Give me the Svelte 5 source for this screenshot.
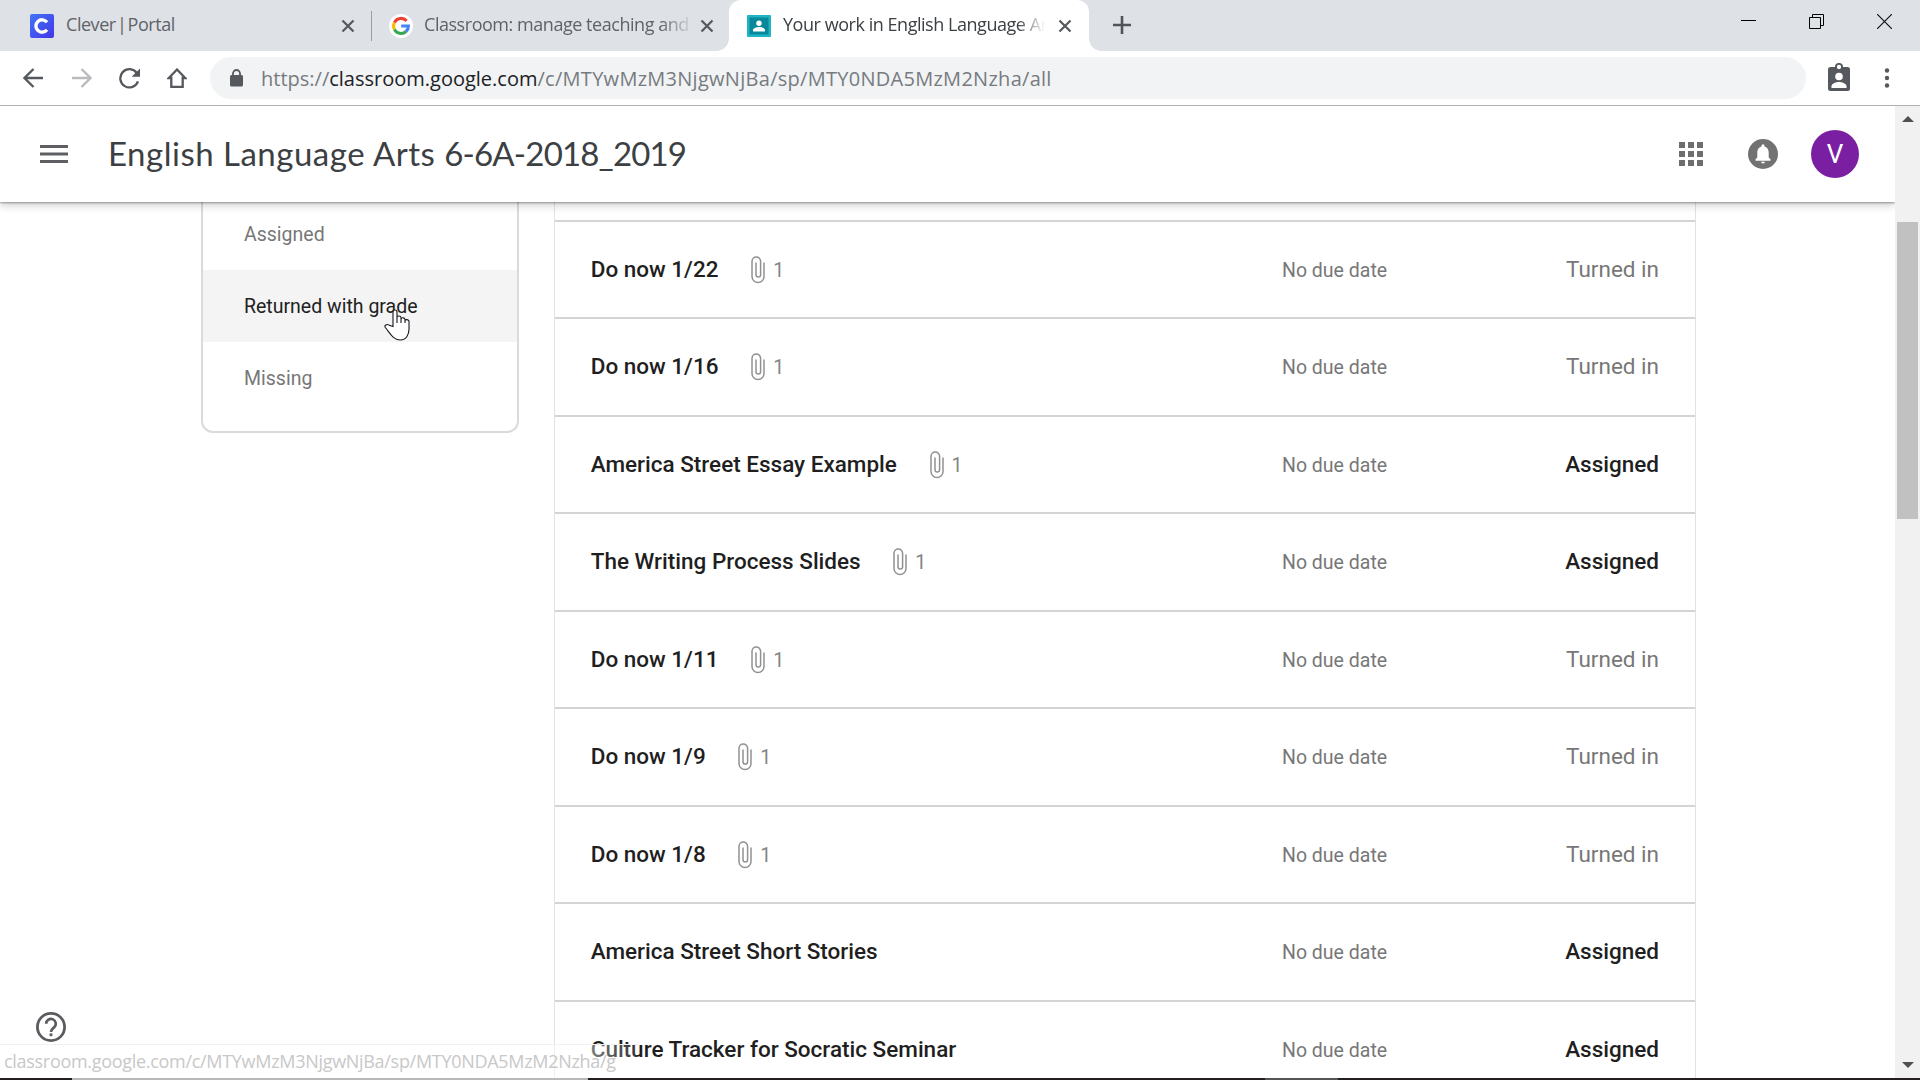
<script>
  const rows = [
    { title: 'Do now 1/22', files: 1, status: 'Turned in' },
    { title: 'Do now 1/16', files: 1, status: 'Turned in' },
    { title: 'America Street Essay Example', files: 1, status: 'Assigned' },
    { title: 'The Writing Process Slides', files: 1, status: 'Assigned' },
    { title: 'Do now 1/11', files: 1, status: 'Turned in' },
    { title: 'Do now 1/9', files: 1, status: 'Turned in' },
    { title: 'Do now 1/8', files: 1, status: 'Turned in' },
    { title: 'America Street Short Stories', files: 0, status: 'Assigned' },
    { title: 'Culture Tracker for Socratic Seminar', files: 0, status: 'Assigned' }
  ];
  const filters = ['Assigned', 'Returned with grade', 'Missing'];
  const dots = [0, 9, 18];
</script>

{#snippet closeIcon()}
  <svg class="close" width="14" height="14" viewBox="0 0 14 14"><path d="M1.5 1.5 12.5 12.5M12.5 1.5 1.5 12.5" stroke="#55585c" stroke-width="2.2" /></svg>
{/snippet}

<div class="screen">
  <div class="tabs">
    <div class="tab first">
      <svg width="24" height="24" viewBox="0 0 24 24"><defs><linearGradient id="cl" x1="0" y1="0" x2="1" y2="1"><stop offset="0" stop-color="#4274f6" /><stop offset="1" stop-color="#4336e8" /></linearGradient></defs><rect width="24" height="24" rx="2" fill="url(#cl)" /><path d="M17 8.2A6.2 6.2 0 1 0 17 15.8" fill="none" stroke="#fff" stroke-width="3.4" /></svg>
      <span class="label clever">Clever | Portal</span>
      {@render closeIcon()}
    </div>
    <div class="divider"></div>
    <div class="tab second">
      <svg width="24" height="24" viewBox="0 0 24 24"><circle cx="12" cy="12" r="12" fill="#fff" /><g fill="none" stroke-width="3.1"><path d="M17.6 6.9A7.4 7.4 0 0 0 5.4 8.6" stroke="#ea4335" /><path d="M5.4 8.6a7.4 7.4 0 0 0 0 6.8" stroke="#fbbc05" /><path d="M5.4 15.4A7.4 7.4 0 0 0 17 17.5" stroke="#34a853" /><path d="M17 17.5A7.4 7.4 0 0 0 19.4 12H12.2" stroke="#4285f4" /></g></svg>
      <span class="label teach">Classroom: manage teaching and</span>
      {@render closeIcon()}
    </div>
    <div class="tab active">
      <svg width="24" height="22" viewBox="0 0 24 22"><rect width="24" height="22" rx="1" fill="#1db5c4" /><rect x="2.5" y="2.5" width="19" height="17" fill="#08889a" /><circle cx="12" cy="8.2" r="2.7" fill="#fff" /><path d="M6 16.6v-1.5c0-2 4-3 6-3s6 1 6 3v1.500z" fill="#fff" /></svg>
      <span class="label work">Your work in English Language Ar</span>
      {@render closeIcon()}
    </div>
    <svg class="plus" width="18" height="18" viewBox="0 0 18 18"><path d="M9 0v18M0 9h18" stroke="#505357" stroke-width="2.6" /></svg>
    <div class="window">
      <svg width="15" height="15" viewBox="0 0 15 15"><path d="M0 6.500h15" stroke="#000" /></svg>
      <svg width="15" height="15" viewBox="0 0 15 15"><path d="M.5 3.500h11v11h-11zM3.500 3.500v-3h11v11h-3" fill="none" stroke="#000" /></svg>
      <svg width="15" height="15" viewBox="0 0 15 15"><path d="M0 0 15 15M15 0 0 15" stroke="#111" stroke-width="1.2" /></svg>
    </div>
  </div>

  <div class="toolbar">
    <svg class="back" width="20" height="20" viewBox="0 0 20 20"><path d="M20 10H2M10.500 1 1.500 10l9 9" fill="none" stroke="#55585c" stroke-width="2.300" /></svg>
    <svg class="fwd" width="20" height="20" viewBox="0 0 20 20"><path d="M0 10h18M9.500 1l9 9-9 9" fill="none" stroke="#b8babd" stroke-width="2.300" /></svg>
    <svg class="reload" width="21" height="21" viewBox="0 0 21 21"><path d="M17.800 5A9.100 9.100 0 1 0 19 13.300" fill="none" stroke="#55585c" stroke-width="2.300" /><path d="M21 .5v8.300h-8.300z" fill="#55585c" /></svg>
    <svg class="home" width="20" height="20" viewBox="0 0 20 20"><path d="M10 1.500 1.800 10H4.300v8.800h11.400V10h2.500z" fill="none" stroke="#55585c" stroke-width="2.300" /></svg>
    <div class="omnibox">
      <svg width="13" height="18" viewBox="0 0 13 18"><rect y="6" width="13" height="11.500" rx="1.500" fill="#55585c" /><path d="M3 7V4.500a3.500 3.500 0 0 1 7 0V7" fill="none" stroke="#55585c" stroke-width="1.800" /></svg>
      <span class="url">https://<b>classroom.google.com</b><span class="path">/c/MTYwMzM3NjgwNjBa/sp/MTY0NDA5MzM2Nzha/all</span></span>
    </div>
    <svg class="person" width="22" height="28" viewBox="0 0 22 28"><rect y="4" width="22" height="24" rx="2.500" fill="#55585c" /><circle cx="11" cy="4" r="3.100" fill="#fff" stroke="#55585c" stroke-width="1.900" /><circle cx="11" cy="13.500" r="3.800" fill="#fff" /><path d="M3.500 25v-1.800c0-2.600 5-4.100 7.500-4.100s7.500 1.500 7.500 4.100V25z" fill="#fff" /></svg>
    <svg class="kebab" width="6" height="20" viewBox="0 0 6 20"><g fill="#55585c"><circle cx="3" cy="2.500" r="2.200" /><circle cx="3" cy="10" r="2.200" /><circle cx="3" cy="17.500" r="2.200" /></g></svg>
  </div>

  <div class="viewport">
    <div class="page">
      <header>
        <svg width="28" height="18" viewBox="0 0 28 18"><path d="M0 1.500h28M0 9h28M0 16.500h28" stroke="#5f6064" stroke-width="3" /></svg>
        <h1>English Language Arts <span>6-6A-2018_2019</span></h1>
        <svg class="apps" width="24" height="24" viewBox="0 0 24 24" fill="#6e6e6e">
          {#each dots as y}{#each dots as x}<rect {x} {y} width="6" height="6" />{/each}{/each}
        </svg>
        <svg class="bell" width="30" height="30" viewBox="0 0 30 30"><circle cx="15" cy="15" r="15" fill="#727272" /><path d="M7.500 21.800v-1.500l1.800-1.800v-5.300c0-3 1.700-5.200 4.200-5.800V6.800a1.500 1.500 0 0 1 3 0v.6c2.500.6 4.200 2.800 4.200 5.800v5.300l1.800 1.800v1.500zM13 22.700h4a2 1.700 0 0 1-4 0z" fill="#fff" /></svg>
        <div class="avatar">V</div>
      </header>
      <main>
        <nav>
          {#each filters as name, i}
            <div class="filter" class:hovered={i === 1}>{name}</div>
          {/each}
        </nav>
        <section>
          {#each rows as row}
            <div class="row">
              <span class="title">{row.title}</span>
              {#if row.files}
                <svg class="clip" width="14" height="28" viewBox="0 0 14 28"><path d="M13 6.500v14a6 6 0 0 1-12 0V5.200a4.300 4.300 0 0 1 8.600 0v13.600a2.300 2.300 0 0 1-4.600 0V6.500" fill="none" stroke="#919191" stroke-width="1.500" /></svg>
                <span class="count">{row.files}</span>
              {/if}
              <span class="due">No due date</span>
              <span class="status" class:strong={row.status === 'Assigned'}>{row.status}</span>
            </div>
          {/each}
        </section>
      </main>
    </div>
    <div class="scroll">
      <svg width="12" height="6" viewBox="0 0 12 6"><path d="M0 6 6 0l6 6z" fill="#505050" /></svg>
      <div class="thumb"></div>
      <svg class="down" width="12" height="6" viewBox="0 0 12 6"><path d="M0 0h12L6 6z" fill="#505050" /></svg>
    </div>
  </div>

  <svg class="help" width="30" height="30" viewBox="0 0 30 30"><circle cx="15" cy="15" r="13.600" fill="none" stroke="#5a5c60" stroke-width="2.800" /><path d="M10.200 11.800a4.800 4.800 0 1 1 7.900 3.600C16.200 17 15 17.700 15 20" fill="none" stroke="#5a5c60" stroke-width="2.700" /><rect x="13.600" y="21.400" width="2.800" height="2.800" fill="#5a5c60" /></svg>
  <div class="bubble"><span>classroom.google.com/c/MTYwMzM3NjgwNjBa/sp/MTY0NDA5MzM2Nzha/g</span></div>
  <div class="taskbar"><i></i><i></i><i></i><i></i><i></i></div>
  <svg class="pointer" width="26" height="32" viewBox="0 0 26 32"><path d="M9 17.500V3a2 2 0 0 1 4 0v11-5.500c0-2 3.700-2 4 0V14v-4c.5-1.800 3.700-1.400 4 .3V14v-2.500c.5-1.500 3.700-1 4 .7V20c0 6-3 11-8.500 11C9 31 6 24 1.300 18.500c-1.300-2 1.500-3.800 3.300-2.600z" fill="#fff" stroke="#15151f" stroke-width="1.100" /></svg>
</div>

<style>
  :global(body) { overflow: hidden; }
  .screen { position: relative; width: 1920px; height: 1080px; overflow: hidden; display: flex; flex-direction: column; background: #fff; font-family: Roboto, sans-serif; }
  svg { display: block; flex: none; }
  .tabs { height: 51px; flex: none; display: flex; background: #dee1e6; font: 18px "Open Sans", sans-serif; color: #5f6368; }
  .tab { display: flex; align-items: center; height: 51px; box-sizing: border-box; }
  .label { margin: -3px 0 0 12px; white-space: nowrap; overflow: hidden; letter-spacing: -.46px; }
  .clever { word-spacing: -3px; }
  .close { margin-left: auto; }
  .first { width: 371px; padding: 0 16px 0 30px; }
  .divider { width: 1px; height: 30px; margin-top: 11px; background: #9b9ea3; }
  .second { width: 357px; padding: 0 15px 0 17px; }
  .teach { width: 266px; margin-left: 11px; mask-image: linear-gradient(90deg, #000 236px, transparent 270px); }
  .active { position: relative; width: 360px; padding: 0 17px 0 18px; background: #fff; border-radius: 12px 12px 0 0; color: #3c4043; }
  .active::before, .active::after { content: ""; position: absolute; bottom: 0; width: 12px; height: 12px; }
  .active::before { left: -12px; background: radial-gradient(circle at 0 0, transparent 11.500px, #fff 12px); }
  .active::after { right: -12px; background: radial-gradient(circle at 100% 0, transparent 11.500px, #fff 12px); }
  .work { width: 266px; mask-image: linear-gradient(90deg, #000 234px, transparent 262px); }
  .plus { margin: 16px 0 0 24px; }
  .window { margin: 14px 28px 0 auto; display: flex; gap: 53px; }

  .toolbar { height: 54px; flex: none; display: flex; align-items: center; padding-left: 23px; border-bottom: 1px solid #b0b0b0; box-sizing: content-box; }
  .fwd { margin-left: 29px; }
  .reload { margin-left: 27px; }
  .home { margin-left: 27px; }
  .omnibox { margin-left: 23px; width: 1596px; height: 42px; border-radius: 21px; background: #f1f3f4; display: flex; align-items: center; box-sizing: border-box; padding-left: 20px; }
  .url { margin-left: 18px; font: 20px "Open Sans", sans-serif; color: #777b80; white-space: nowrap; }
  .url b { font-weight: 400; color: #202124; }
  .path { letter-spacing: .28px; }
  .person { margin-left: 22px; margin-top: -2px; }
  .kebab { margin-left: 34px; }

  .viewport { flex: 1; display: flex; min-height: 0; }
  .page { width: 1895px; display: flex; flex-direction: column; min-height: 0; overflow: hidden; }
  header { position: relative; z-index: 1; height: 96px; flex: none; display: flex; align-items: center; padding: 0 36px 0 40px; background: #fff; box-shadow: 0 1px 2px rgba(0,0,0,.35), 0 3px 9px rgba(0,0,0,.2); }
  h1 { margin: -3px auto 0 40px; font: 400 33px Lato, sans-serif; color: #3c4043; white-space: nowrap; letter-spacing: .5px; }
  h1 span { letter-spacing: -.82px; }
  .bell { margin-left: 45px; }
  .avatar { margin-left: 33px; width: 48px; height: 48px; border-radius: 50%; background: #7b1fa2; color: #fff; display: grid; place-items: center; font-size: 26px; }
  main { flex: 1; display: flex; align-items: flex-start; padding-left: 201px; min-height: 0; overflow: hidden; }
  nav { width: 318px; height: 231px; box-sizing: border-box; border: 2px solid #dadada; border-top: 0; border-radius: 0 0 12px 12px; margin-right: 35px; }
  .filter { height: 72px; box-sizing: border-box; padding-left: 41px; line-height: 74px; font-size: 19.500px; color: #777; }
  .filter:first-child { margin-top: -4px; }
  .hovered { background: #f4f4f5; color: #212121; }
  section { width: 1142px; box-sizing: border-box; padding-top: 17.700px; border: solid #e2e2e2; border-width: 0 1px; }
  .row { height: 97.500px; box-sizing: border-box; border-top: 2px solid #d4d4d4; display: flex; align-items: center; padding: 0 36px 0 35.700px; }
  .title { margin-top: -1px; font-weight: 500; color: #1f1f1f; font-size: 22.500px; }
  .clip { margin: 1px 0 0 32.700px; }
  .count { margin: 2px 0 0 8px; font-size: 19.500px; color: #848484; }
  .due { margin-left: auto; margin-top: 2px; width: 247px; font-size: 19.500px; color: #777; }
  .status { width: 130px; margin-top: -1px; text-align: right; color: #777; font-size: 22.500px; }
  .strong { font-weight: 500; color: #1f1f1f; }
  .scroll { width: 25px; background: #f1f1f1; display: flex; flex-direction: column; align-items: center; box-sizing: border-box; padding: 10px 0 12px; }
  .thumb { width: 21px; height: 297px; margin-top: 100px; background: #c1c1c1; }
  .down { margin-top: auto; }

  .help { position: absolute; left: 36px; top: 1012px; }
  .bubble { position: absolute; left: 0; top: 1044px; width: 637px; height: 34px; background: linear-gradient(90deg, rgba(255,255,255,.45) 585px, rgba(255,255,255,.1)); border-top: 1px solid #f1f1f1; box-sizing: border-box; font: 18px/33px "Open Sans", sans-serif; letter-spacing: -.3px; color: #c8c8c8; padding-left: 4px; white-space: nowrap; }
  .taskbar { position: absolute; left: 0; top: 1078px; width: 1920px; height: 2px; display: flex; }
  .taskbar i { background: #231f20; flex: 1; }
  .taskbar i:nth-child(1) { flex: 0 0 72px; }
  .taskbar i:nth-child(2) { flex: 0 0 516px; background: #b8b8b8; }
  .taskbar i:nth-child(3) { flex: 0 0 677px; }
  .taskbar i:nth-child(4) { flex: 0 0 73px; background: #555; }
  .pointer { position: absolute; left: 384px; top: 309px; }
</style>
